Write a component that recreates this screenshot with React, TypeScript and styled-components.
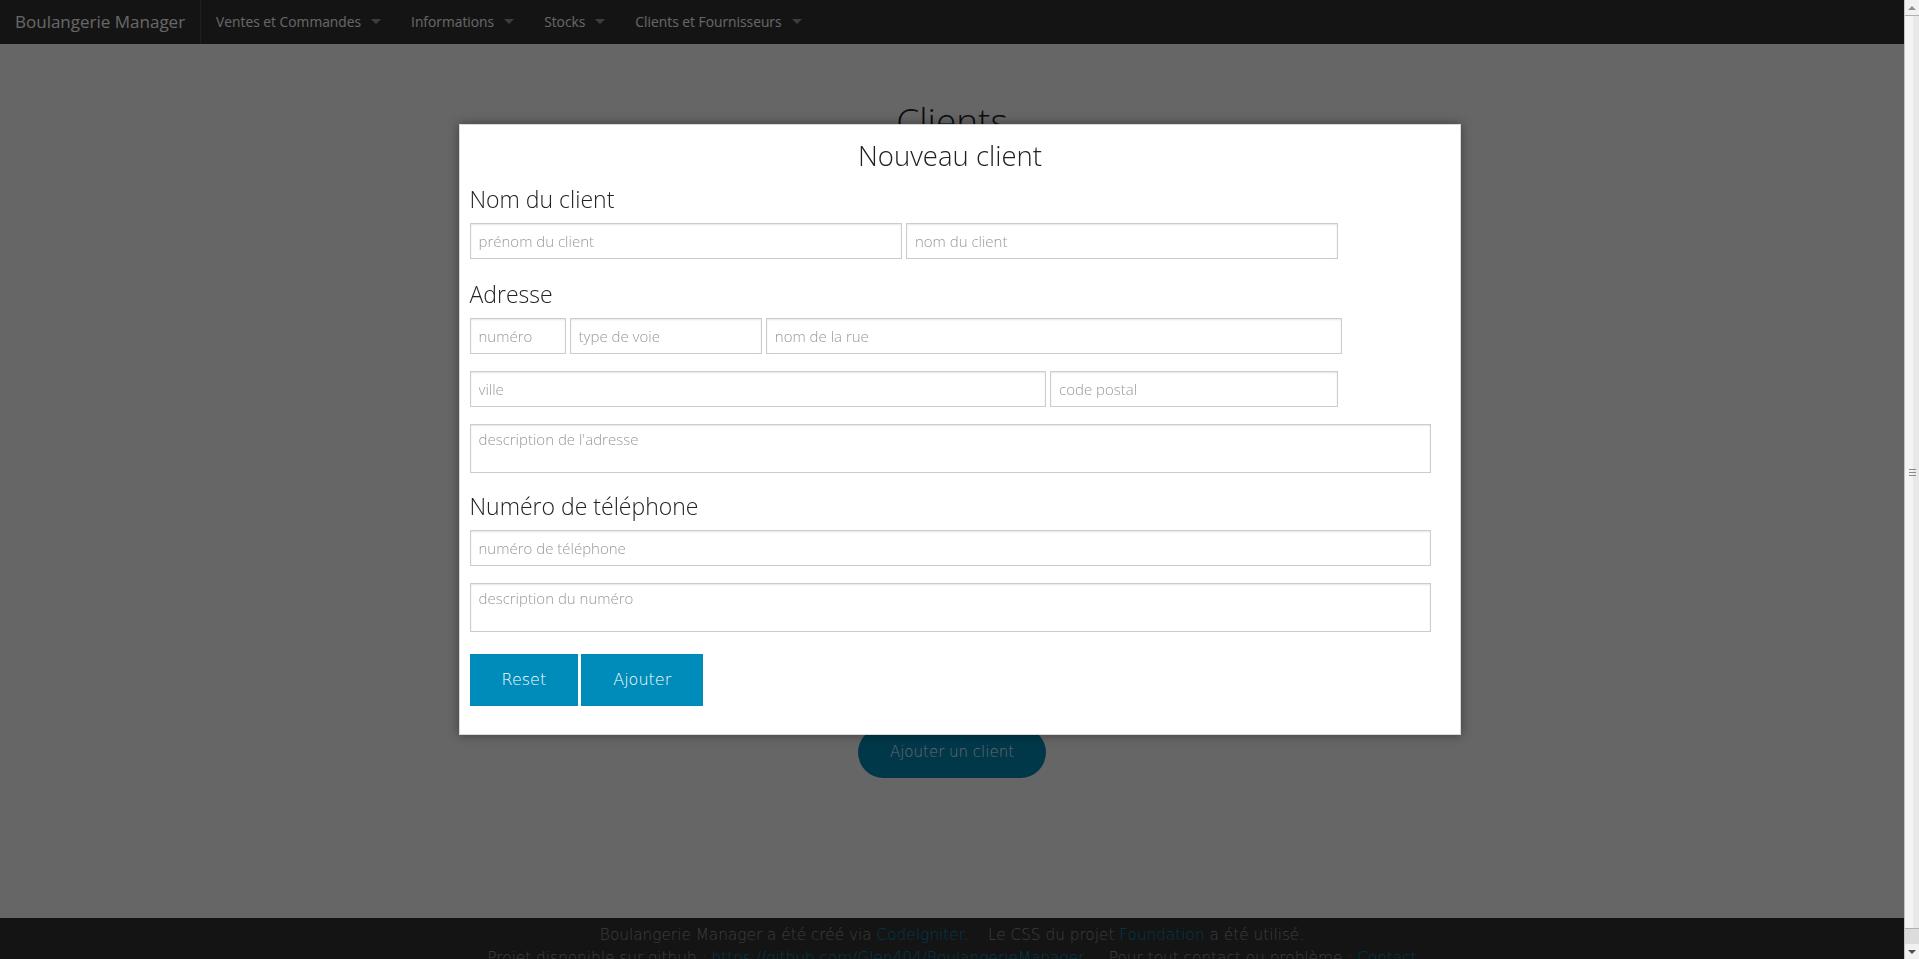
import styled, { createGlobalStyle } from 'styled-components';

const GlobalStyle = createGlobalStyle`
  * { box-sizing: border-box; }
  body {
    margin: 0;
    padding-right: 15px;
    background: #fff;
    color: #222;
    font-family: "DejaVu Sans", sans-serif;
  }
`;

const TopBar = styled.nav`
  display: flex;
  height: 44px;
  background: #333;
`;

const Brand = styled.div`
  display: flex;
  align-items: center;
  padding: 0 15px 2px;
  border-right: 1px solid #4e4e4e;
  font-family: "Open Sans", sans-serif;
  font-size: 17px;
  color: #fff;
`;

const MenuItem = styled.div`
  position: relative;
  display: flex;
  align-items: center;
  padding: 0 35px 2px 15px;
  font-family: "Open Sans", sans-serif;
  font-size: 13.8px;
  color: #fff;

  &::after {
    content: '';
    position: absolute;
    right: 15px;
    top: 50%;
    margin-top: -3px;
    border: 5px solid transparent;
    border-bottom-width: 0;
    border-top-color: rgba(255, 255, 255, 0.5);
  }
`;

const Main = styled.main`
  display: flex;
  flex-direction: column;
  align-items: center;
  min-height: 874px;
  padding: 51px 0 140px;
`;

const PageTitle = styled.h1`
  margin: 0;
  font-family: "Open Sans", sans-serif;
  font-weight: 300;
  font-size: 37px;
  line-height: 1.4;
  color: #222;
`;

const ClientList = styled.div`
  flex: 1;
  width: 100%;
`;

const Button = styled.button<{ $round?: boolean }>`
  border: none;
  margin: 0;
  padding: 16px 32px 17px;
  background: #008cba;
  color: #fff;
  font-family: "DejaVu Sans", sans-serif;
  font-weight: 200;
  font-size: ${({ $round }) => ($round ? '15px' : '16px')};
  line-height: normal;
  border-radius: ${({ $round }) => ($round ? '1000px' : '0')};
  cursor: pointer;
`;

const Footer = styled.footer`
  background: #333;
  padding: 6px 0 10px;
  text-align: center;
  font-weight: 200;
  font-size: 15.3px;
  line-height: 23px;
  color: #999;

  a {
    color: #008cba;
    text-decoration: none;
  }
`;

const Overlay = styled.div`
  position: fixed;
  inset: 0;
  background: rgba(0, 0, 0, 0.6);
`;

const Modal = styled.div`
  position: fixed;
  top: 124px;
  left: calc(50vw - 501px);
  width: 1002px;
  display: flex;
  flex-direction: column;
  padding: 12px 29px 28px 10px;
  background: #fff;
  border: 1px solid #d8d8d8;
  box-shadow: 0 0 10px rgba(0, 0, 0, 0.4);
`;

const ModalTitle = styled.h3`
  margin: 0 0 10px;
  text-align: center;
  font-family: "Open Sans", sans-serif;
  font-weight: 300;
  font-size: 27.5px;
  line-height: 37px;
  color: #222;
`;

const SectionTitle = styled.h4<{ $top?: number }>`
  margin: ${({ $top }) => $top ?? 0}px 0 9px;
  font-family: "Open Sans", sans-serif;
  font-weight: 300;
  font-size: 23px;
  line-height: 30px;
  color: #222;
`;

const FieldRow = styled.div`
  display: flex;
  gap: 4px;
  margin-bottom: 17px;
`;

const fieldStyle = `
  display: block;
  margin: 0;
  border: 1px solid #ccc;
  background: #fff;
  box-shadow: inset 0 1px 2px rgba(0, 0, 0, 0.1);
  font-family: "Open Sans", sans-serif;
  font-weight: 300;
  font-size: 15px;
  color: #222;
  outline: none;
  &::placeholder { color: #999; }
`;

const Input = styled.input<{ $w: number }>`
  ${fieldStyle}
  width: ${({ $w }) => $w}%;
  flex: none;
  height: 36px;
  padding: 0 8px;
`;

const TextArea = styled.textarea`
  ${fieldStyle}
  width: 100%;
  height: 49px;
  padding: 4px 8px;
  line-height: normal;
  resize: none;
`;

const Actions = styled.div`
  display: flex;
  gap: 3px;
  margin-top: 5px;
`;

/* page scrollbar, drawn over the right edge as in the screenshot */
const ScrollBar = styled.div`
  position: fixed;
  top: 0;
  right: 0;
  bottom: 0;
  width: 15px;
  display: flex;
  flex-direction: column;
  background: #dcdcdc;
  border-left: 1px solid #c4c4c4;
  z-index: 10;
`;

const ScrollArrow = styled.div<{ $down?: boolean }>`
  height: 15px;
  flex: none;
  display: flex;
  align-items: center;
  justify-content: center;
  background: #f1f1f1;

  &::before {
    content: '';
    border: 4px solid transparent;
    ${({ $down }) =>
      $down
        ? 'border-bottom-width: 0; border-top-color: #505050;'
        : 'border-top-width: 0; border-bottom-color: #909090;'}
  }
`;

const ScrollThumb = styled.div`
  flex: 1;
  margin-bottom: 15px;
  display: flex;
  flex-direction: column;
  align-items: center;
  justify-content: center;
  gap: 2px;
  background: linear-gradient(to right, #f4f4f4 55%, #e8e8e8 55%);
  border-top: 1px solid #b0b0b0;
  border-bottom: 1px solid #b0b0b0;
`;

const Grip = styled.span`
  width: 7px;
  height: 1px;
  background: #8a8a8a;
`;

const menus = ['Ventes et Commandes', 'Informations', 'Stocks', 'Clients et Fournisseurs'];

export default function App() {
  return (
    <>
      <GlobalStyle />
      <TopBar>
        <Brand>Boulangerie Manager</Brand>
        {menus.map((m) => (
          <MenuItem key={m}>{m}</MenuItem>
        ))}
      </TopBar>

      <Main>
        <PageTitle>Clients</PageTitle>
        <ClientList />
        <Button $round>Ajouter un client</Button>
      </Main>

      <Footer>
        <div>
          Boulangerie Manager a été créé via <a href="#">CodeIgniter</a>.&nbsp;&nbsp;&nbsp; Le CSS du projet{' '}
          <a href="#">Foundation</a> a été utilisé.
        </div>
        <div>
          Projet disponible sur github : <a href="#">https://github.com/Glen404/BoulangerieManager</a>&nbsp;.&nbsp;&nbsp;
          Pour tout contact ou problème : <a href="#">Contact</a>
        </div>
      </Footer>

      <Overlay />
      <Modal>
        <ModalTitle>Nouveau client</ModalTitle>

        <SectionTitle>Nom du client</SectionTitle>
        <FieldRow>
          <Input $w={45} placeholder="prénom du client" />
          <Input $w={45} placeholder="nom du client" />
        </FieldRow>

        <SectionTitle $top={3}>Adresse</SectionTitle>
        <FieldRow>
          <Input $w={10} placeholder="numéro" />
          <Input $w={20} placeholder="type de voie" />
          <Input $w={60} placeholder="nom de la rue" />
        </FieldRow>
        <FieldRow>
          <Input $w={60} placeholder="ville" />
          <Input $w={30} placeholder="code postal" />
        </FieldRow>
        <FieldRow>
          <TextArea placeholder="description de l'adresse" />
        </FieldRow>

        <SectionTitle $top={1}>Numéro de téléphone</SectionTitle>
        <FieldRow>
          <Input $w={100} placeholder="numéro de téléphone" />
        </FieldRow>
        <FieldRow>
          <TextArea placeholder="description du numéro" />
        </FieldRow>

        <Actions>
          <Button>Reset</Button>
          <Button>Ajouter</Button>
        </Actions>
      </Modal>

      <ScrollBar>
        <ScrollArrow />
        <ScrollThumb>
          <Grip />
          <Grip />
          <Grip />
        </ScrollThumb>
        <ScrollArrow $down />
      </ScrollBar>
    </>
  );
}
